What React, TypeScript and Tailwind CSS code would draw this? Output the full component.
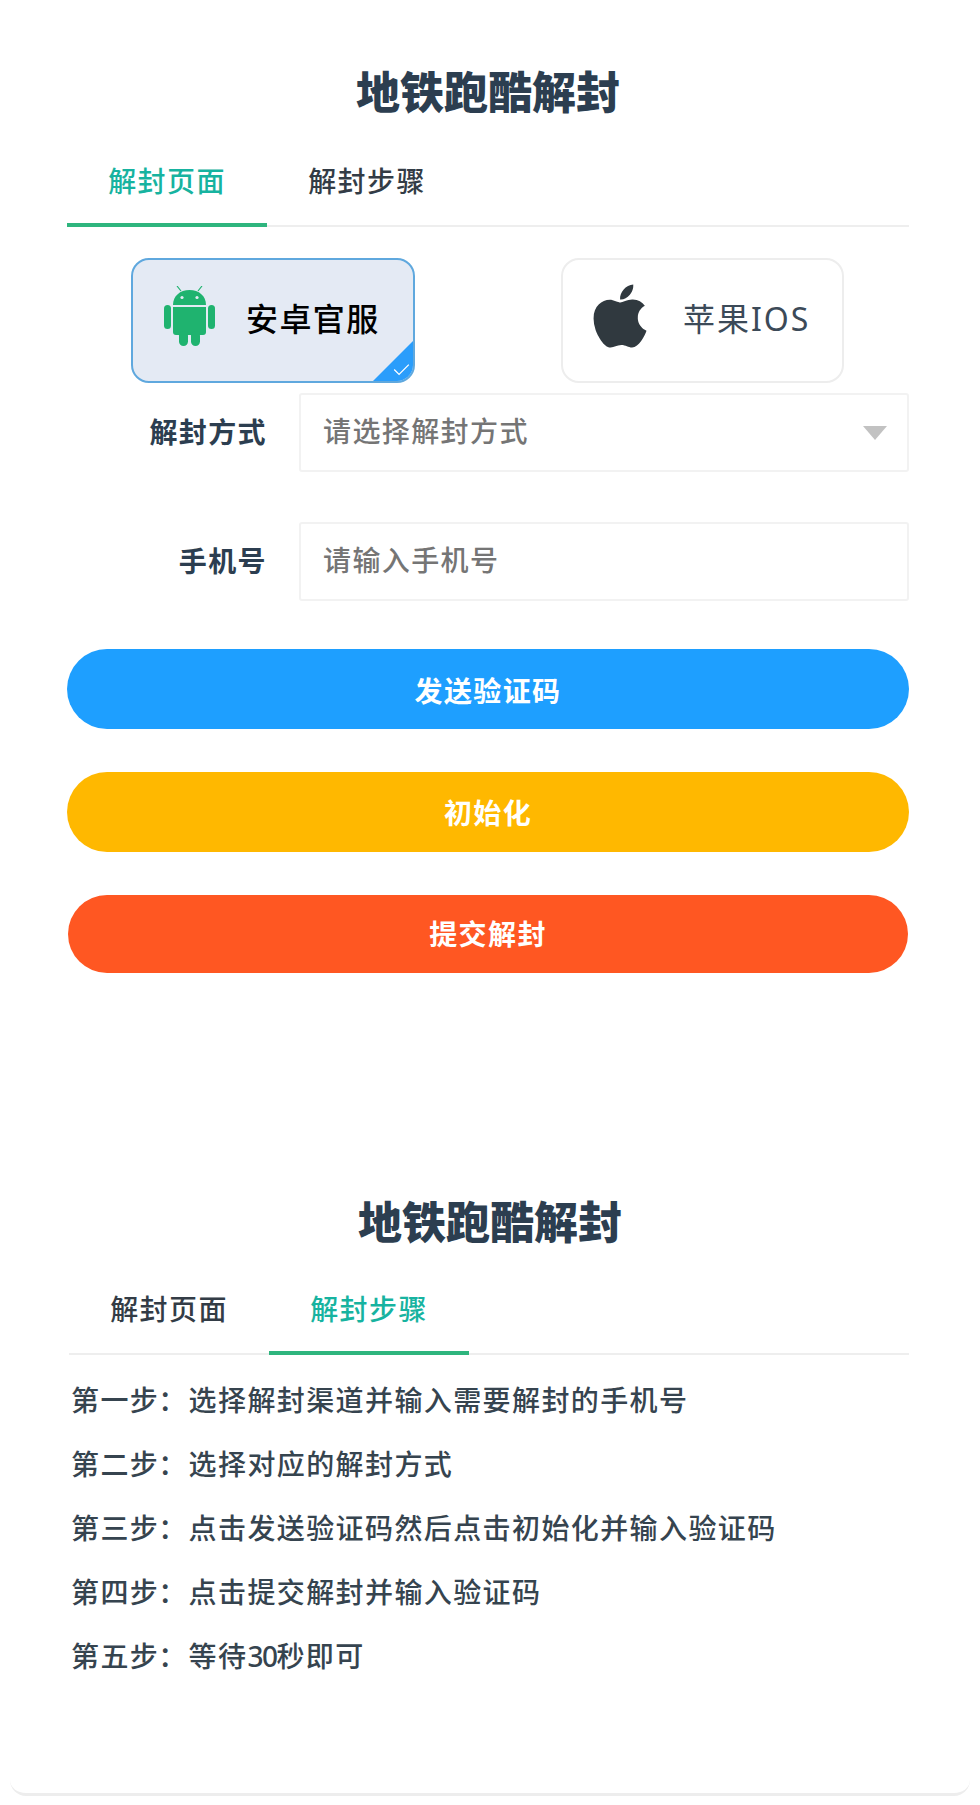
import React from "react";
import { FaApple } from "react-icons/fa";

const FONT = "[font-family:'Noto_Sans','Noto_Sans_CJK_SC',sans-serif]";

function Android() {
  return (
    <svg viewBox="0 0 51 60" className="mb-[10px] h-[60px] w-[51px]" fill="#1fb36f">
      <path d="M17 5 L13 0 M34 5 L38 0" stroke="#1fb36f" strokeWidth="1.2" fill="none" />
      <path d="M9 19 C9 10 16 4 25.5 4 C35 4 42 10 42 19 Z" />
      <circle cx="18" cy="11.5" r="1.6" fill="#e4eaf4" />
      <circle cx="33" cy="11.5" r="1.6" fill="#e4eaf4" />
      <path d="M9 21 H42 V46 a3 3 0 0 1 -3 3 H12 a3 3 0 0 1 -3 -3 Z" />
      <rect x="0" y="19" width="7" height="24" rx="3.5" />
      <rect x="44" y="19" width="7" height="24" rx="3.5" />
      <rect x="15" y="45" width="9" height="15" rx="4.5" />
      <rect x="27" y="45" width="9" height="15" rx="4.5" />
    </svg>
  );
}

function Tabs({ active }: { active: 0 | 1 }) {
  const labels = ["解封页面", "解封步骤"];
  return (
    <div className="flex h-[90px] border-b-2 border-[#eeeeee]">
      {labels.map((label, i) => (
        <div
          key={label}
          className={
            i === active
              ? "h-[90px] w-[200px] border-b-4 border-[#2eb57e] text-center leading-[88px] text-[#17b3a0]"
              : "h-[90px] w-[200px] text-center leading-[88px] text-[#333c46]"
          }
        >
          {label}
        </div>
      ))}
    </div>
  );
}

function Title({ className }: { className: string }) {
  return (
    <h1 className={`h-[60px] text-center text-[44px] font-black leading-[60px] tracking-normal text-[#2c3e50] ${className}`}>
      地铁跑酷解封
    </h1>
  );
}

function Field({ label, placeholder, select }: { label: string; placeholder: string; select?: boolean }) {
  return (
    <div className="flex items-center">
      <div className="mb-[2px] w-[200px] text-right font-bold text-[#2c3e50]">{label}</div>
      <div className="ml-[32px] flex h-[79px] flex-1 items-center justify-between rounded-[3px] border-2 border-[#f2f2f2] pl-[22px] pr-[20px] text-[#757575]">
        <span className="mb-[3px]">{placeholder}</span>
        {select && <span className="h-0 w-0 border-x-[12.5px] border-t-[14px] border-x-transparent border-t-[#c2c2c2]" />}
      </div>
    </div>
  );
}

const steps: [string, React.ReactNode][] = [
  ["第一步", "选择解封渠道并输入需要解封的手机号"],
  ["第二步", "选择对应的解封方式"],
  ["第三步", "点击发送验证码然后点击初始化并输入验证码"],
  ["第四步", "点击提交解封并输入验证码"],
  [
    "第五步",
    <>
      等待<span className="tracking-[-1.5px]">30</span>秒即可
    </>,
  ],
];

export default function App() {
  return (
    <div className={`min-h-[1805px] w-[980px] bg-white text-[28px] font-medium tracking-[1.4px] ${FONT}`}>
      <div className="mx-[10px] h-[1796px] rounded-b-[16px] border-b-[3px] border-[#ededed] bg-white">
        <section className="pl-[57px] pr-[61px] pt-[62px]">
          <Title className="" />
          <div className="mt-[15px]">
            <Tabs active={0} />
          </div>
          <div className="mt-[31px] flex justify-between pl-[64px] pr-[65px]">
            <div className="relative flex h-[125px] w-[284px] items-center overflow-hidden rounded-[18px] border-2 border-[#5fa8de] bg-[#e4eaf4] pl-[31px]">
              <Android />
              <span className="mb-[4px] ml-[31px] text-[32px] font-medium text-black">安卓官服</span>
              <span className="absolute bottom-[-1px] right-[-1px] h-0 w-0 border-b-[42px] border-l-[42px] border-b-[#2a9dfb] border-l-transparent" />
              <svg viewBox="0 0 20 16" className="absolute bottom-[5px] right-[3px] h-[13px] w-[17px]" fill="none" stroke="white" strokeWidth="1.6">
                <path d="M1 8 L7 14 L19 2" />
              </svg>
            </div>
            <div className="flex h-[125px] w-[283px] items-center rounded-[18px] border-2 border-[#ededed] bg-white pl-[27px]">
              <FaApple className="mb-[10px] h-[72px] w-[60px] text-[#30393f]" />
              <span className="mb-[4px] ml-[33px] text-[32px] font-normal tracking-[2px] text-[#3c4a58]">苹果IOS</span>
            </div>
          </div>
          <div className="mt-[10px] flex flex-col gap-[50px]">
            <Field label="解封方式" placeholder="请选择解封方式" select />
            <Field label="手机号" placeholder="请输入手机号" />
          </div>
          <div className="mt-[48px] flex flex-col text-center font-bold text-white">
            <button className="h-[80px] rounded-full bg-[#1e9fff] pt-[3px] font-bold tracking-[1.4px]">发送验证码</button>
            <button className="mt-[43px] h-[80px] rounded-full bg-[#ffb800] pt-[2px] font-bold tracking-[1.4px]">初始化</button>
            <button className="mx-px mt-[43px] h-[78px] rounded-full bg-[#ff5722] font-bold tracking-[1.4px]">提交解封</button>
          </div>
        </section>
        <section className="mt-[219px] pl-[59px] pr-[61px]">
          <Title className="pl-[2px]" />
          <div className="mt-[13px]">
            <Tabs active={1} />
          </div>
          <div className="mt-[14px] pl-[2px] text-[#36444f]">
            {steps.map(([a, b]) => (
              <p key={a} className="h-[64px] whitespace-nowrap leading-[63px]">
                {a}
                <span className="-ml-[1px] mr-[1px]">：</span>
                {b}
              </p>
            ))}
          </div>
        </section>
      </div>
    </div>
  );
}
